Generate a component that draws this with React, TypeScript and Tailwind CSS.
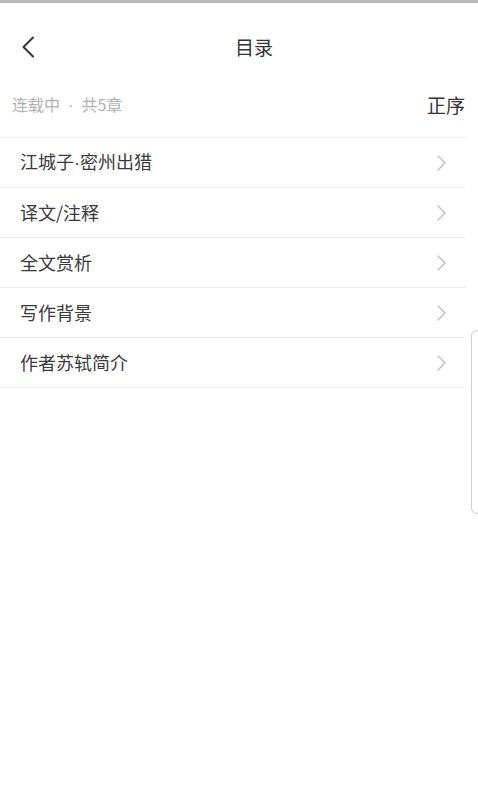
import React from 'react';

const chapters = ['江城子·密州出猎', '译文/注释', '全文赏析', '写作背景', '作者苏轼简介'];

// the middle dot should be narrow, as in a Latin font
const renderTitle = (title: string) =>
  title.split('·').map((part, i) => (
    <React.Fragment key={i}>
      {i > 0 && <span style={{ fontFamily: '"Liberation Sans", sans-serif' }}>·</span>}
      {part}
    </React.Fragment>
  ));

const App: React.FC = () => {
  return (
    <div
      className="relative w-[478px] min-h-[798px] bg-white overflow-hidden"
      style={{ fontFamily: '"Noto Sans CJK SC", "Noto Sans", sans-serif' }}
    >
      <div className="h-[3px] bg-[#b9b9b9]" />

      {/* Header */}
      <div className="flex items-center h-[88px]">
        <div className="w-[44px] pl-[21px] flex items-center">
          <svg width="14" height="22" viewBox="0 0 14 22" fill="none">
            <path d="M12 1.5 L2.5 11 L12 20.5" stroke="#333" strokeWidth="2" strokeLinecap="round" strokeLinejoin="round" />
          </svg>
        </div>
        <div className="flex-1 text-center text-[19px] text-[#333]">目录</div>
        <div className="w-[14px]" />
      </div>

      {/* Sub header */}
      <div className="h-[46px]">
        <div className="flex items-center justify-between h-[28px] pl-[12px] pr-[13px]">
          <span className="text-[16px] text-[#b0b0b0]">
            连载中 <span style={{ fontFamily: '"Liberation Sans", sans-serif' }}>&nbsp;·&nbsp;</span> 共5章
          </span>
          <span className="text-[19px] text-[#333]">正序</span>
        </div>
      </div>

      {/* Chapter list */}
      <div className="mr-[12px] border-t border-[#f3f3f3]">
        {chapters.map(title => (
          <div key={title} className="flex items-center justify-between h-[50px] pl-[20px] pr-[20px] border-b border-[#ebebeb]">
            <span className="text-[18px] text-[#3a3a3a]">{renderTitle(title)}</span>
            <svg width="9" height="16" viewBox="0 0 9 16" fill="none">
              <path d="M1 1 L8 8 L1 15" stroke="#bdbdbd" strokeWidth="1.3" strokeLinecap="round" strokeLinejoin="round" />
            </svg>
          </div>
        ))}
      </div>

      {/* Side tab */}
      <div className="absolute left-[471px] top-[330px] w-[24px] h-[184px] border border-[#cfcfcf] rounded-[6px] bg-white" />
    </div>
  );
};

export default App;
